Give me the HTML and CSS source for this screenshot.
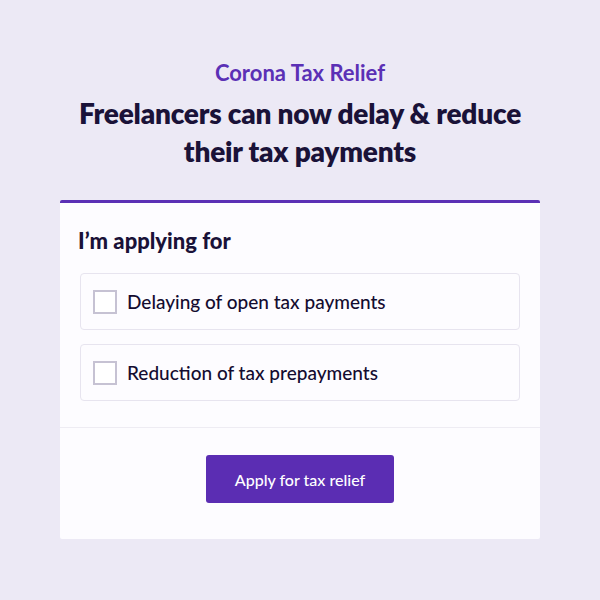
FILE: index.html
```html
<!DOCTYPE html>
<html>
<head>
<meta charset="utf-8">
<link rel="stylesheet" href="styles.css">
</head>
<body>
<main class="page">
  <p class="eyebrow">Corona Tax Relief</p>
  <h1 class="title">Freelancers can now delay &amp; reduce<br>their tax payments</h1>
  <section class="card">
    <div class="card-body">
      <h2 class="card-title">I’m applying for</h2>
      <label class="option"><span class="box"></span><span class="option-text">Delaying of open tax payments</span></label>
      <label class="option"><span class="box"></span><span class="option-text">Reduction of tax prepayments</span></label>
    </div>
    <div class="card-footer">
      <button class="btn">Apply for tax relief</button>
    </div>
  </section>
</main>
</body>
</html>
```
FILE: styles.css
```css
* { box-sizing: border-box; }
html, body { margin: 0; padding: 0; }
body {
  background: #ece9f5;
  font-family: Lato, "Open Sans", sans-serif;
  color: #1a1238;
  width: 600px;
  height: 600px;
}
.page {
  display: flex;
  flex-direction: column;
  align-items: center;
  padding-top: 58px;
}
.eyebrow {
  margin: 0;
  font-size: 22px;
  font-weight: 700;
  color: #5b30b5;
  line-height: 30px;
}
.title {
  margin: 6px 0 0;
  font-size: 28px;
  font-weight: 800;
  line-height: 38px;
  text-align: center;
  letter-spacing: -0.2px;
}
.card {
  margin-top: 30px;
  width: 480px;
  background: #fdfcff;
  border-top: 3px solid #5b30b5;
  border-radius: 2px;
}
.card-body {
  padding: 24px 20px 26px;
  display: flex;
  flex-direction: column;
  gap: 15px;
}
.card-title {
  margin: 0 0 3px -2px;
  font-size: 22px;
  font-weight: 900;
  line-height: 28px;
}
.option {
  display: flex;
  align-items: center;
  gap: 10px;
  height: 57px;
  padding: 0 12px;
  border: 1px solid #e7e4ef;
  border-radius: 4px;
  background: #fdfcff;
}
.option + .option { margin-top: -1px; }
.box {
  width: 24px;
  height: 24px;
  border: 2px solid #c6c2d3;
  background: #fff;
}
.option-text {
  font-size: 19px;
  font-weight: 500;
  color: #140c30;
}
.card-footer {
  border-top: 1px solid #eeecf3;
  padding: 27px 0 36px;
  display: flex;
  justify-content: center;
}
.btn {
  width: 188px;
  height: 48px;
  background: #5b2db3;
  color: #fff;
  border: none;
  border-radius: 3px;
  font-family: Lato, "Open Sans", sans-serif;
  font-size: 16px;
  font-weight: 500;
}
```
